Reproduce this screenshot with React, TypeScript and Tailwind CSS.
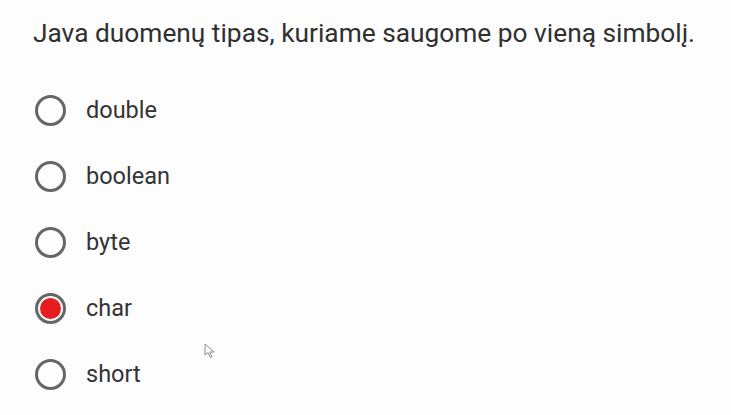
const options = ["double", "boolean", "byte", "char", "short"];
const selected = "char";

function Radio({ checked }: { checked: boolean }) {
  return (
    <span className="flex h-[31px] w-[31px] shrink-0 items-center justify-center rounded-full border-[3px] border-[#666666]">
      {checked && <span className="h-[21px] w-[21px] rounded-full bg-[#e61c1f]" />}
    </span>
  );
}

export default function App() {
  return (
    <div
      className="relative h-[415px] w-[731px] overflow-hidden bg-[#fdfdfd] text-[#303030]"
      style={{ fontFamily: "Roboto, 'Noto Sans', sans-serif" }}
    >
      <div className="px-[33px] pt-[17px] text-[26.3px] leading-[32px]">
        Java duomenų tipas, kuriame saugome po vieną simbolį.
      </div>
      <div className="mt-[46px] flex flex-col gap-[35px] pl-[35px]">
        {options.map((o) => (
          <div key={o} className="flex h-[31px] items-center gap-[20px]">
            <Radio checked={o === selected} />
            <span className="text-[23.5px] leading-[31px] text-[#333333]">{o}</span>
          </div>
        ))}
      </div>
      <svg
        className="absolute left-[204px] top-[343px]"
        width="12"
        height="16"
        viewBox="0 0 12 16"
      >
        <path d="M1 1 L1 12 L4 9.5 L6.5 14.5 L8 13.8 L5.8 9 L10 9 Z" fill="#fff" stroke="#8a8a8a" strokeWidth="1" />
      </svg>
    </div>
  );
}
